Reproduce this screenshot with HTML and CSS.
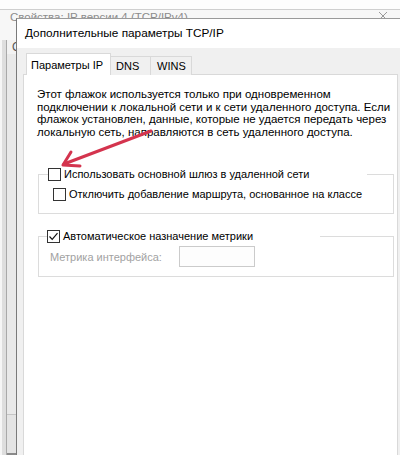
FILE: index.html
```
<!DOCTYPE html>
<html lang="ru">
<head>
<meta charset="utf-8">
<title>Дополнительные параметры TCP/IP</title>
<link rel="stylesheet" href="styles.css">
</head>
<body>
<div class="desktop">
  <div class="back-window">
    <div class="top-strip"></div>
    <div class="back-title">
      <span class="back-title-text">Свойства: IP версии 4 (TCP/IPv4)</span>
      <svg class="back-close" width="10" height="10" viewBox="0 0 10 10"><path d="M1 1 L9 9 M9 1 L1 9" stroke="#9a9a9a" stroke-width="1" fill="none"/></svg>
    </div>
    <div class="back-body">
      <div class="back-edge"></div>
      <div class="back-col">
        <span class="back-tab-char">О</span>
        <div class="back-bar"></div>
        <div class="back-box"></div>
      </div>
    </div>
  </div>

  <div class="dialog">
    <div class="dialog-title">
      <span class="dialog-title-text">Дополнительные параметры TCP/IP</span>
      <svg class="dialog-close" width="12" height="12" viewBox="0 0 12 12"><path d="M1 1 L11 11 M11 1 L1 11" stroke="#222" stroke-width="1.1" fill="none"/></svg>
    </div>
    <div class="dialog-body">
      <div class="tabs">
        <div class="tab tab-active">Параметры IP</div>
        <div class="tab tab-dns">DNS</div>
        <div class="tab tab-wins">WINS</div>
      </div>
      <div class="panel">
        <p class="info">Этот флажок используется только при одновременном подключении к локальной сети и к сети удаленного доступа. Если флажок установлен, данные, которые не удается передать через локальную сеть, направляются в сеть удаленного доступа.</p>

        <fieldset class="group group-gateway">
          <legend class="legend legend-gateway"><span class="check"></span><span class="check-label">Использовать основной шлюз в удаленной сети</span></legend>
          <div class="row row-route"><span class="check"></span><span class="check-label">Отключить добавление маршрута, основанное на классе</span></div>
        </fieldset>

        <fieldset class="group group-metric">
          <legend class="legend legend-metric"><span class="check check-on"><svg width="11" height="11" viewBox="0 0 11 11"><path d="M1.5 5.5 L4.2 8.3 L9.5 2.2" stroke="#111" stroke-width="1.2" fill="none"/></svg></span><span class="check-label">Автоматическое назначение метрики</span></legend>
          <div class="row row-metric"><span class="metric-label">Метрика интерфейса:</span><span class="metric-input"></span></div>
        </fieldset>
      </div>
    </div>
  </div>

  <svg class="arrow" width="400" height="455" viewBox="0 0 400 455">
    <path d="M151 131 L64 164" stroke="#d4344e" stroke-width="3" stroke-linecap="round" fill="none"/>
    <path d="M71 152 L63 165 L80 166" stroke="#d4344e" stroke-width="3" stroke-linecap="round" stroke-linejoin="round" fill="none"/>
  </svg>
</div>
</body>
</html>
```
FILE: styles.css
```
* { box-sizing: border-box; }
html, body { margin: 0; padding: 0; }
body {
  width: 400px;
  height: 455px;
  overflow: hidden;
  font-family: "Liberation Sans", Arial, sans-serif;
  font-size: 12px;
  color: #000;
  background: #fff;
}
.desktop {
  position: relative;
  width: 400px;
  height: 455px;
  overflow: hidden;
}

/* back window */
.back-window {
  position: absolute;
  left: 0;
  top: 0;
  width: 400px;
  height: 455px;
  background: #f2f2f2;
  display: flex;
  flex-direction: column;
}
.top-strip {
  height: 10px;
  background: #fdfdfd;
  border-bottom: 1px solid #cfcfcf;
}
.back-title {
  height: 30px;
  background: #f7f7f7;
  display: flex;
  align-items: flex-start;
  justify-content: space-between;
  padding: 0 12px 0 10px;
}
.back-title-text {
  color: #8c8c8c;
  font-size: 11.5px;
  line-height: 14px;
}
.back-close { margin-top: 1px; }
.back-body {
  flex: 1;
  display: flex;
}
.back-edge {
  width: 7px;
  border-left: 2px solid #f6f6f6;
  background: #dedede;
  border-right: 1px solid #a9a9a9;
}
.back-col {
  width: 9px;
  display: flex;
  flex-direction: column;
}
.back-tab-char {
  font-size: 12px;
  line-height: 14px;
  color: #555;
  margin: 0 0 0 5px;
  height: 14px;
}
.back-bar {
  flex: 1;
  background: #e9e9e9;
  border-bottom: 1px solid #c5c5c5;
}
.back-box {
  height: 40px;
  background: #e4e4e4;
  border-bottom: 2px solid #8a8a8a;
}

/* front dialog */
.dialog {
  position: absolute;
  left: 16px;
  top: 18px;
  width: 400px;
  height: 450px;
  background: #f0f0f0;
  border-left: 1px solid #7a7a7a;
  border-top: 1px solid #9a9a9a;
  display: flex;
  flex-direction: column;
}
.dialog-title {
  height: 29px;
  background: #fff;
  display: flex;
  align-items: center;
  justify-content: space-between;
  padding: 0 0 0 8px;
}
.dialog-title-text {
  font-size: 11.8px;
  margin-top: -1px;
}
.dialog-close { margin-right: -8px; margin-top: -1px; }
.dialog-body {
  flex: 1;
  padding: 5px 18px 0 6px;
  display: flex;
  flex-direction: column;
}
.tabs {
  display: flex;
  align-items: flex-end;
  padding-left: 3px;
  height: 22px;
  position: relative;
  z-index: 1;
  margin-bottom: -1px;
}
.tab {
  height: 19px;
  padding: 0 0 0 5px;
  line-height: 18px;
  font-size: 11px;
  border: 1px solid #d9d9d9;
  border-bottom: none;
  border-left: none;
  background: #f0f0f0;
}
.tab-dns { width: 40px; }
.tab-wins { width: 41px; padding-left: 6px; }
.tab-active {
  height: 22px;
  background: #fff;
  border: 1px solid #d9d9d9;
  border-bottom: none;
  padding: 0 7px 0 4px;
  line-height: 22px;
}
.panel {
  flex: 1;
  background: #fff;
  border: 1px solid #d9d9d9;
  padding: 13px 0 0 13px;
}
.info {
  margin: 0;
  width: 356px;
  line-height: 12.5px;
  font-size: 11.5px;
}

.group {
  margin: 0;
  border: 1px solid #dcdcdc;
  padding: 0;
  width: 356px;
  margin-left: 1px;
  min-width: 0;
}
.group-gateway { margin-top: 29px; padding: 6px 0 12px 0; }
.group-metric { margin-top: 15px; padding: 3px 0 9px 0; }
.legend {
  display: flex;
  align-items: center;
  padding: 0;
  margin-left: 9px;
  height: 14px;
}
.legend-gateway { width: 319px; }
.legend-metric { margin-left: 8px; width: 273px; }
.check {
  width: 13px;
  height: 13px;
  border: 1px solid #333;
  background: #fff;
  flex: none;
  display: flex;
  align-items: center;
  justify-content: center;
}
.check-label {
  margin-left: 3px;
  font-size: 11px;
  white-space: nowrap;
}
.row {
  display: flex;
  align-items: center;
}
.row-route { height: 14px; margin-left: 14px; }
.row-metric { margin-left: 11px; }
.metric-label {
  color: #a2a2a2;
  font-size: 11px;
  width: 129px;
}
.metric-input {
  width: 76px;
  height: 21px;
  border: 1px solid #cbcbcb;
  background: #fdfdfd;
}

.arrow {
  position: absolute;
  left: 0;
  top: 0;
  pointer-events: none;
}
```
